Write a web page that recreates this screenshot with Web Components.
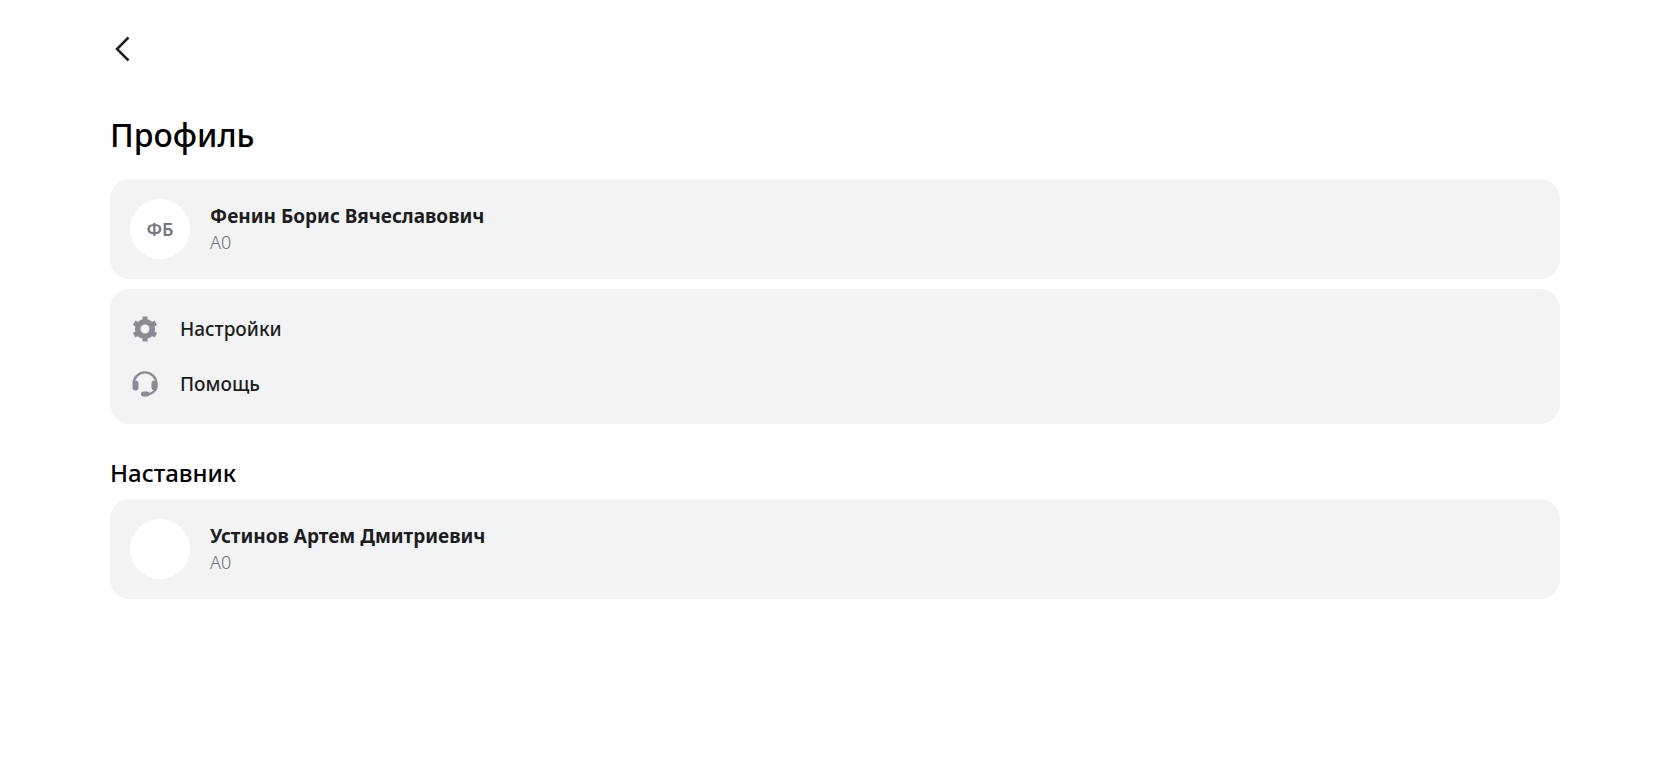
<!DOCTYPE html>
<html lang="ru">
<head>
<meta charset="utf-8">
<meta name="viewport" content="width=device-width, initial-scale=1">
<title>Профиль</title>
<style>
    body {
        margin: 0;
        background: #fff;
        color: #1d1d20;
        font-family: "Noto Sans", "Open Sans", sans-serif;
    }
</style>
</head>
<body>
<profile-page>
    <back-button slot="nav"></back-button>
    <page-section heading="Профиль">
        <person-card initials="ФБ">
            Фенин Борис Вячеславович
            <span slot="note">A0</span>
        </person-card>
        <menu-card>
            <menu-item icon="settings" href="#settings">Настройки</menu-item>
            <menu-item icon="help" href="#help">Помощь</menu-item>
        </menu-card>
    </page-section>
    <page-section heading="Наставник" level="2">
        <person-card>
            Устинов Артем Дмитриевич
            <span slot="note">A0</span>
        </person-card>
    </page-section>
</profile-page>

<script>
const icons = {
  settings: `
    <path d="M12.500 2.500h5v4h-5zM12.500 23.500h5v4h-5z"/>
    <path d="M12.500 2.500h5v4h-5zM12.500 23.500h5v4h-5z" transform="rotate(60 15 15)"/>
    <path d="M12.500 2.500h5v4h-5zM12.500 23.500h5v4h-5z" transform="rotate(120 15 15)"/>
    <circle cx="15" cy="15" r="7.300" fill="none" stroke="currentColor" stroke-width="5.600"/>`,
  help: `
    <path d="M3.800 14a11.200 10.600 0 0 1 22.400 0v2.500c0 5.500-4 8.800-9.200 8.800h-1.500" fill="none" stroke="currentColor" stroke-width="2.400"/>
    <rect x="2.500" y="11.500" width="6" height="10" rx="3"/>
    <rect x="21.500" y="11.500" width="6" height="10" rx="3"/>
    <rect x="11" y="22.500" width="8.500" height="5" rx="2.500"/>`,
};

class ProfilePage extends HTMLElement {
  constructor() {
    super();
    this.attachShadow({ mode: 'open' }).innerHTML = `
      <style>
        :host {
            display: block;
            box-sizing: border-box;
            padding: 29px 117px 40px 110px;
        }
        nav {
            display: flex;
            margin-bottom: 40px;
        }
      </style>
      <nav><slot name="nav"></slot></nav>
      <main><slot></slot></main>`;
  }
}

class BackButton extends HTMLElement {
  constructor() {
    super();
    this.attachShadow({ mode: 'open' }).innerHTML = `
      <style>
        :host {
            display: block;
        }
        button {
            display: block;
            padding: 0;
            border: 0;
            background: none;
            color: #1d1d20;
            cursor: pointer;
        }
        svg {
            display: block;
        }
      </style>
      <button type="button" aria-label="Назад">
        <svg width="24" height="40" viewBox="0 0 24 40" fill="none" stroke="currentColor" stroke-width="2.500">
          <path d="M18.500 8.500 7 20l11.500 11.500"/>
        </svg>
      </button>`;
  }
}

class PageSection extends HTMLElement {
  connectedCallback() {
    const tag = this.getAttribute('level') === '2' ? 'h2' : 'h1';
    this.attachShadow({ mode: 'open' }).innerHTML = `
      <style>
        :host {
            display: block;
        }
        h1, h2 {
            margin: 0;
            color: #000;
            font-weight: 500;
        }
        h1 {
            padding-bottom: 18px;
            font-size: 32px;
            line-height: 52px;
        }
        h2 {
            padding: 32px 0 9px;
            font-size: 24px;
            line-height: 34px;
        }
        .cards {
            display: flex;
            flex-direction: column;
            gap: 10px;
        }
      </style>
      <${tag}></${tag}>
      <div class="cards"><slot></slot></div>`;
    this.shadowRoot.querySelector(tag).textContent = this.getAttribute('heading');
  }
}

class PersonCard extends HTMLElement {
  connectedCallback() {
    this.attachShadow({ mode: 'open' }).innerHTML = `
      <style>
        :host {
            display: flex;
            align-items: center;
            gap: 20px;
            padding: 20px;
            border-radius: 20px;
            background: #f1f3f5;
        }
        .avatar {
            display: flex;
            flex: none;
            align-items: center;
            justify-content: center;
            width: 60px;
            height: 60px;
            border-radius: 50%;
            background: #fff;
            color: #77777f;
            font-size: 18px;
            font-weight: 600;
        }
        .name {
            font-size: 19px;
            font-weight: 700;
            line-height: 26px;
        }
        .note {
            color: #6d6d75;
            font-size: 18px;
            font-weight: 300;
            line-height: 26px;
        }
      </style>
      <div class="avatar"></div>
      <div>
        <div class="name"><slot></slot></div>
        <div class="note"><slot name="note"></slot></div>
      </div>`;
    this.shadowRoot.querySelector('.avatar').textContent = this.getAttribute('initials') || '';
  }
}

class MenuCard extends HTMLElement {
  constructor() {
    super();
    this.attachShadow({ mode: 'open' }).innerHTML = `
      <style>
        :host {
            display: flex;
            flex-direction: column;
            gap: 15px;
            padding: 20px;
            border-radius: 20px;
            background: #f1f3f5;
        }
      </style>
      <slot></slot>`;
  }
}

class MenuItem extends HTMLElement {
  connectedCallback() {
    this.attachShadow({ mode: 'open' }).innerHTML = `
      <style>
        :host {
            display: block;
        }
        a {
            display: flex;
            align-items: center;
            gap: 20px;
            color: inherit;
            font-size: 19px;
            font-weight: 500;
            line-height: 40px;
            text-decoration: none;
        }
        svg {
            flex: none;
            color: #8b8b93;
            fill: currentColor;
        }
      </style>
      <a>
        <svg width="30" height="30" viewBox="0 0 30 30" aria-hidden="true">${icons[this.getAttribute('icon')]}</svg>
        <span><slot></slot></span>
      </a>`;
    this.shadowRoot.querySelector('a').href = this.getAttribute('href');
  }
}

customElements.define('profile-page', ProfilePage);
customElements.define('back-button', BackButton);
customElements.define('page-section', PageSection);
customElements.define('person-card', PersonCard);
customElements.define('menu-card', MenuCard);
customElements.define('menu-item', MenuItem);
</script>
</body>
</html>
